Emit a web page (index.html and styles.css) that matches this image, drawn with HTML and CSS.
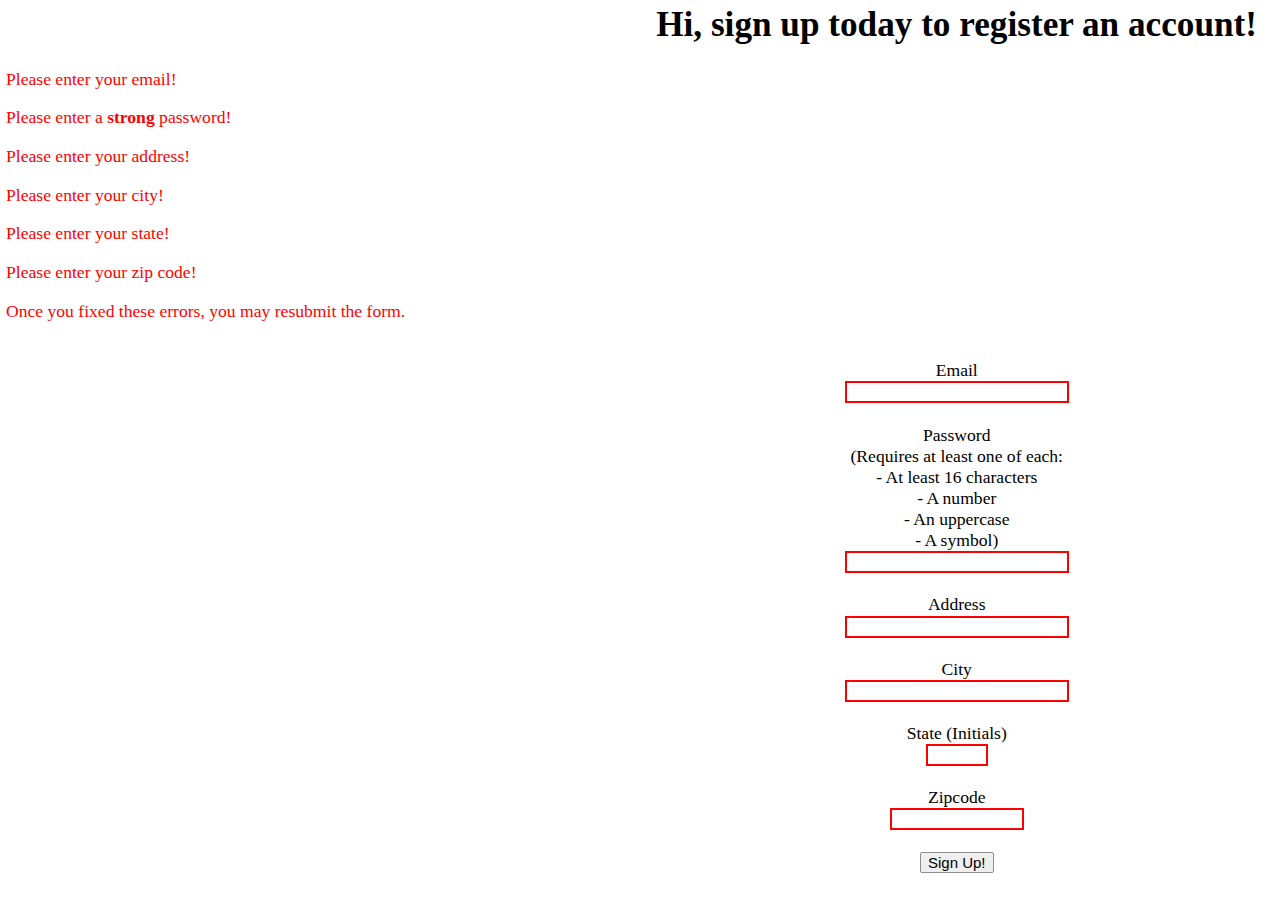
FILE: index.html
```html
<!DOCTYPE html>
<html lang="en">
<head>
<meta charset="utf-8">
<title>Sign Up</title>
<link rel="stylesheet" href="styles.css">
</head>
<body>
<div class="page">
  <h1 class="title">Hi, sign up today to register an account!</h1>
  <div class="errors">
    <p class="error">Please enter your email!</p>
    <p class="error">Please enter a <strong>strong</strong> password!</p>
    <p class="error">Please enter your address!</p>
    <p class="error">Please enter your city!</p>
    <p class="error">Please enter your state!</p>
    <p class="error">Please enter your zip code!</p>
    <p class="error">Once you fixed these errors, you may resubmit the form.</p>
  </div>
  <div class="columns">
    <div class="spacer"></div>
    <form class="signup">
      <div class="field">
        <label class="label" for="email">Email</label>
        <input class="input input-wide" id="email" type="text">
      </div>
      <div class="field">
        <label class="label" for="password">Password<br>(Requires at least one of each:<br>- At least 16 characters<br>- A number<br>- An uppercase<br>- A symbol)</label>
        <input class="input input-wide" id="password" type="password">
      </div>
      <div class="field">
        <label class="label" for="address">Address</label>
        <input class="input input-wide" id="address" type="text">
      </div>
      <div class="field">
        <label class="label" for="city">City</label>
        <input class="input input-wide" id="city" type="text">
      </div>
      <div class="field">
        <label class="label" for="state">State (Initials)</label>
        <input class="input input-state" id="state" type="text">
      </div>
      <div class="field">
        <label class="label" for="zip">Zipcode</label>
        <input class="input input-zip" id="zip" type="text">
      </div>
      <div class="field field-submit">
        <button class="submit" type="button">Sign Up!</button>
      </div>
    </form>
  </div>
</div>
</body>
</html>
```

FILE: styles.css
```css
html, body {
  margin: 0;
  padding: 0;
  background: #ffffff;
}

body {
  font-family: "Liberation Serif", "Times New Roman", serif;
  font-size: 17.6px;
  line-height: 1.2;
  color: #000000;
}

.page {
  padding: 0 8px;
}

.title {
  margin: 0;
  padding: 3.5px 16px 0 0;
  font-size: 35.2px;
  font-weight: bold;
  line-height: 1.2;
  text-align: right;
}

.errors {
  padding-top: 22.8px;
  margin-left: -2px;
}

.error {
  margin: 0 0 17.6px 0;
  color: #ff0000;
}

.columns {
  display: grid;
  grid-template-columns: 1fr 1fr;
  padding-top: 20.8px;
}

.signup {
  display: flex;
  flex-direction: column;
  align-items: center;
  gap: 21.2px;
  text-align: center;
}

.field {
  display: flex;
  flex-direction: column;
  align-items: center;
}

.label {
  display: block;
}

.input {
  box-sizing: border-box;
  height: 22px;
  margin: 0;
  padding: 1px 2px;
  border: 2px solid #ff0000;
  border-radius: 0;
  background: #ffffff;
  font-family: "Liberation Sans", Arial, sans-serif;
  font-size: 13.33px;
}

.input-wide {
  width: 224px;
}

.input-state {
  width: 62px;
}

.input-zip {
  width: 134px;
}

.field-submit {
  padding-top: 0.8px;
}

.submit {
  box-sizing: border-box;
  height: 21px;
  margin: 0;
  padding: 0 7px;
  font-family: "Liberation Sans", Arial, sans-serif;
  font-size: 15px;
  line-height: 1.15;
  color: #000000;
  background: #efefef;
  border: 1px solid #8f8f8f;
  border-radius: 2px;
}
```
